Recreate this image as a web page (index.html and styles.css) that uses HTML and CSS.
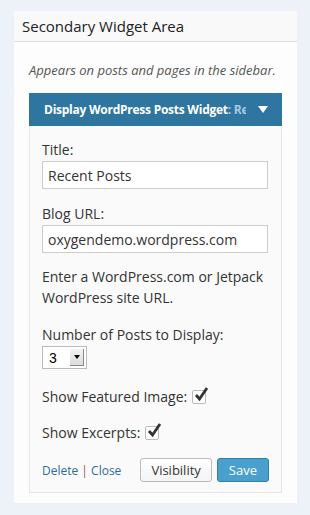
FILE: index.html
```html
<!DOCTYPE html>
<html lang="en">
<head>
  <meta charset="UTF-8">
  <meta name="viewport" content="width=device-width, initial-scale=1.0">
  <title>Widgets</title>
  <link rel="stylesheet" href="styles.css">
</head>
<body>
  <div class="sidebar">
    <div class="sidebar-name">Secondary Widget Area</div>

    <div class="sidebar-body">
      <p class="sidebar-desc">Appears on posts and pages in the sidebar.</p>

      <div class="widget">
        <div class="widget-top">
          <span class="widget-title">Display WordPress Posts Widget<span class="in-title">: Recent Posts</span></span>
          <svg class="arrow" viewBox="0 0 10 7"><path d="M0 0h10L5 7z"/></svg>
        </div>

        <div class="widget-inside">
          <label class="field-label">Title:</label>
          <input class="text-input" type="text" value="Recent Posts">

          <label class="field-label">Blog URL:</label>
          <input class="text-input" type="text" value="oxygendemo.wordpress.com">

          <p class="help">Enter a WordPress.com or Jetpack WordPress site URL.</p>

          <label class="field-label">Number of Posts to Display:</label>
          <div class="select">
            <span class="select-value">3</span>
            <span class="select-btn">
              <svg viewBox="0 0 6 4"><path d="M0 0h6L3 4z"/></svg>
            </span>
          </div>

          <div class="check-row first">
            Show Featured Image:
            <span class="checkbox"><svg viewBox="0 0 16 16"><path d="M3 8l3.5 4L14 1" /></svg></span>
          </div>

          <div class="check-row">
            Show Excerpts:
            <span class="checkbox"><svg viewBox="0 0 16 16"><path d="M3 8l3.5 4L14 1" /></svg></span>
          </div>

          <div class="widget-control">
            <div class="links">
              <a href="#">Delete</a> <span class="sep">|</span> <a href="#">Close</a>
            </div>
            <button class="btn">Visibility</button>
            <button class="btn btn-primary">Save</button>
          </div>
        </div>
      </div>
    </div>
  </div>
</body>
</html>
```

FILE: styles.css
```css
* {
  box-sizing: border-box;
  margin: 0;
  padding: 0;
}

body {
  font-family: 'Open Sans', sans-serif;
  background-color: #edf1f8;
  color: #333;
  padding: 11px 13px 0 14px;
}

.sidebar {
  background-color: #fdfdfd;
  width: 283px;
  padding-bottom: 10px;
}

.sidebar-name {
  background-color: #f9f9f9;
  border-bottom: 1px solid #dfdfdf;
  height: 31px;
  padding: 2px 8px 0;
  font-size: 15px;
  line-height: 26px;
  color: #222;
}

.sidebar-body {
  padding: 0 15px;
}

.sidebar-desc {
  font-style: italic;
  font-size: 13px;
  line-height: 18px;
  color: #555;
  padding: 19px 0 0;
  height: 51px;
}

.widget {
  border: 1px solid #e5e5e5;
  background-color: #fafafa;
}

.widget-top {
  background-color: #2e75a0;
  height: 33px;
  margin: -1px -1px 0;
  display: flex;
  align-items: center;
  padding: 0 0 0 15px;
  color: #fff;
}

.widget-title {
  font-size: 12px;
  font-weight: 700;
  letter-spacing: -0.25px;
  white-space: nowrap;
  overflow: hidden;
  width: 202px;
}

.in-title {
  color: #a9c9de;
}

.arrow {
  width: 10px;
  height: 7px;
  fill: #fff;
  margin-left: 12px;
}

.widget-inside {
  padding: 14px 12px 10px;
  font-size: 14px;
  color: #333;
}

.field-label {
  display: block;
  line-height: 20px;
  margin-bottom: 1px;
}

.text-input {
  display: block;
  width: 226px;
  height: 28px;
  border: 1px solid #ccc;
  background: #fff;
  font-family: inherit;
  font-size: 14px;
  color: #333;
  padding: 0 5px;
  margin-bottom: 15px;
}

.help {
  line-height: 21px;
  margin: -2px 0 17px;
}

.select {
  display: flex;
  align-items: center;
  width: 45px;
  height: 23px;
  border: 1px solid #bbb;
  background: #fff;
  padding: 0 2px 0 6px;
}

.select-value {
  flex: 1;
  font-family: 'Liberation Sans', sans-serif;
  font-size: 14px;
  color: #000;
}

.select-btn {
  width: 14px;
  height: 17px;
  background: linear-gradient(#f4f4f4, #dcdcdc);
  border-right: 1px solid #888;
  border-bottom: 1px solid #888;
  display: flex;
  align-items: center;
  justify-content: center;
}

.select-btn svg {
  width: 6px;
  height: 4px;
  fill: #000;
}

.check-row {
  display: flex;
  align-items: center;
  gap: 5px;
  line-height: 20px;
  margin-top: 16px;
}

.check-row.first {
  margin-top: 18px;
}

.checkbox {
  width: 14px;
  height: 14px;
  border: 1px solid #bbb;
  border-radius: 2px;
  background: #fff;
  position: relative;
}

.checkbox svg {
  position: absolute;
  left: 0;
  top: -4px;
  width: 16px;
  height: 16px;
  fill: none;
  stroke: #333;
  stroke-width: 2.8;
}

.widget-control {
  display: flex;
  align-items: center;
  margin-top: 15px;
}

.links {
  flex: 1;
  font-size: 12px;
  color: #555;
}

.links a {
  color: #2a6c9c;
  text-decoration: none;
}

.sep {
  color: #a0524b;
}

.btn {
  font-family: inherit;
  font-size: 13px;
  height: 24px;
  padding: 0 10px;
  border: 1px solid #bbb;
  border-radius: 3px;
  background: linear-gradient(#fefefe, #f4f4f4);
  color: #333;
  margin-left: 5px;
}

.btn-primary {
  background: #4aa0cc;
  border-color: #2e80ad;
  color: #fff;
  padding: 0 11px;
}
```
